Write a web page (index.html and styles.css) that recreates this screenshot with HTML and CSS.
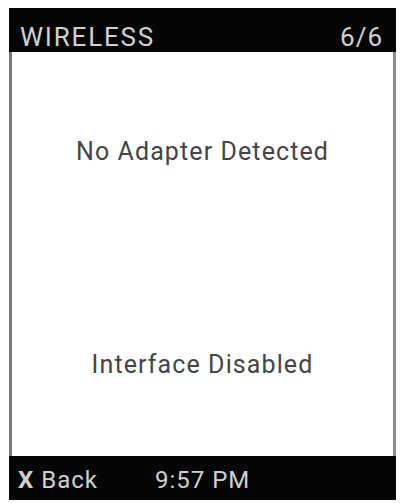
FILE: index.html
```html
<!DOCTYPE html>
<html>
<head>
<meta charset="utf-8">
<link rel="stylesheet" href="styles.css">
</head>
<body>
<div class="screen">
  <div class="header">
    <span class="title">WIRELESS</span>
    <span class="page">6/6</span>
  </div>
  <div class="content">
    <div class="msg msg-top">No Adapter Detected</div>
    <div class="msg msg-bottom">Interface Disabled</div>
  </div>
  <div class="footer">
    <span class="back"><span class="x">X</span> Back</span>
    <span class="time">9:57 PM</span>
  </div>
</div>
</body>
</html>
```
FILE: styles.css
```css
html, body {
  margin: 0;
  padding: 0;
  background: #ffffff;
}
body {
  padding: 8px 5px 3px 9px;
  font-family: Roboto, "Liberation Sans", sans-serif;
}
.screen {
  width: 387px;
  display: flex;
  flex-direction: column;
}
.header {
  height: 44px;
  background: #050505;
  color: #d0d0d0;
  display: flex;
  justify-content: space-between;
  align-items: center;
  padding: 14px 13px 0 11px;
  box-sizing: border-box;
  font-size: 26px;
  letter-spacing: 1.8px;
}
.page {
  letter-spacing: 1px;
}
.content {
  height: 404px;
  border-left: 3px solid #7a7a7a;
  border-right: 3px solid #8a8a8a;
  box-sizing: border-box;
  display: flex;
  flex-direction: column;
  align-items: center;
  color: #444444;
  font-size: 25px;
  letter-spacing: 1.1px;
}
.msg-top {
  margin-top: 85px;
}
.msg-bottom {
  margin-top: 184px;
}
.footer {
  height: 44px;
  background: #050505;
  color: #d0d0d0;
  display: flex;
  align-items: center;
  padding: 4px 0 0 9px;
  box-sizing: border-box;
  font-size: 24px;
  letter-spacing: 1px;
}
.x {
  font-weight: bold;
}
.back {
  width: 137px;
}
```
